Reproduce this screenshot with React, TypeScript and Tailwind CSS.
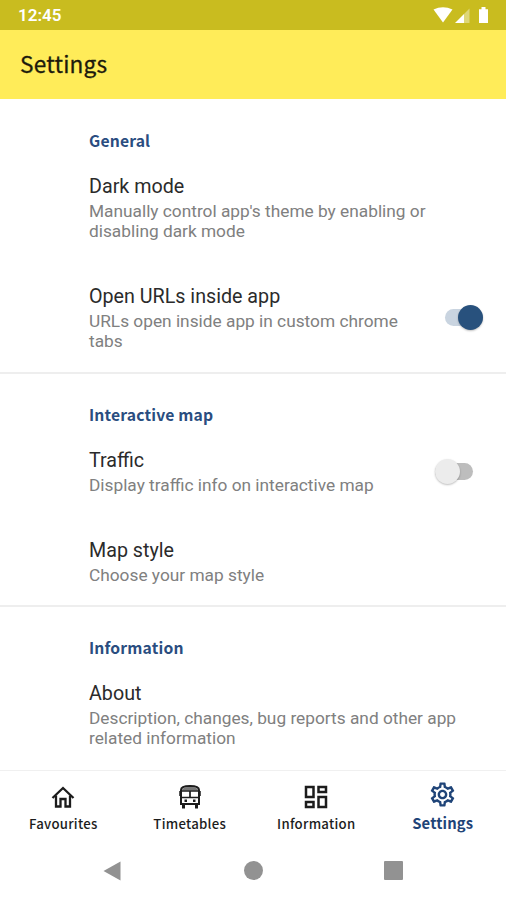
import type { ReactNode } from "react";
import clsx from "clsx";
import { MdOutlineDashboard, MdOutlineSettings } from "react-icons/md";

interface PreferenceProps {
  title: string;
  summary: string[];
  checked?: boolean;
}

interface SectionProps {
  title: string;
  children: ReactNode;
}

function StatusBar() {
  return (
    <div className="flex h-[30px] items-center justify-between bg-[#c9bc1f] pl-[18px] pr-[14px] text-white">
      <span className="pt-[2px] font-['Roboto',sans-serif] text-[17px] font-semibold">12:45</span>
      <svg width="60" height="18" viewBox="0 0 60 18" fill="currentColor">
        <path d="M1.500 3.500Q11 -1 20.500 3.500L11 16.500Z" />
        <path d="M23 17L32 8V17Z" />
        <path d="M32 8L37.500 2.500V17H32Z" opacity="0.4" />
        <path d="M47 3.200h2.500V1h4v2.200H56V17H47Z" />
      </svg>
    </div>
  );
}

function Switch({ checked }: { checked: boolean }) {
  return (
    <div
      className={clsx(
        "flex h-[17px] w-[38px] items-center rounded-full",
        checked ? "justify-end bg-[#c9d4e0]" : "bg-[#bdbdbd]",
      )}
    >
      <div
        className={clsx(
          "size-[25px] shrink-0 rounded-full shadow-[0_1px_2px_rgba(0,0,0,0.25)]",
          checked ? "bg-[#28517d]" : "bg-[#ececec]",
        )}
      />
    </div>
  );
}

function Preference({ title, summary, checked }: PreferenceProps) {
  return (
    <div className="flex items-center justify-between pb-5 pt-6 font-['Roboto',sans-serif]">
      <div>
        <div className="text-[19.7px] leading-[24px] text-[#2b2b2b]">{title}</div>
        <div className="mt-[2px] text-[17.3px] leading-[20px] text-[#808080]">
          {summary.map((line) => (
            <div key={line} className="whitespace-nowrap">
              {line}
            </div>
          ))}
        </div>
      </div>
      {checked !== undefined && (
        <div className={clsx("pb-[2px]", checked ? "mr-[23px]" : "mr-[33px]")}>
          <Switch checked={checked} />
        </div>
      )}
    </div>
  );
}

function Section({ title, children }: SectionProps) {
  return (
    <section className="border-b-2 border-[#eeeeee] pl-[89px] first:pb-px last:border-b-0">
      <h2 className="h-[51px] pt-[29px] font-['Noto_Sans_CJK_SC',sans-serif] text-[15.7px] font-bold leading-[24px] tracking-[0.01em] text-[#2a4d80]">
        {title}
      </h2>
      {children}
    </section>
  );
}

function HomeIcon() {
  return (
    <svg width="24" height="24" viewBox="0 0 24 24" fill="none" stroke="currentColor" strokeWidth="2.300">
      <path d="M1.500 13L12 3L22.500 13" />
      <path d="M5 10.500V21.500H9.500V14H14.500V21.500H19V10.500" />
    </svg>
  );
}

function BusIcon() {
  return (
    <svg width="26" height="26" viewBox="0 0 26 26" fill="none" stroke="currentColor">
      <path d="M4 6Q4 2 13 2Q22 2 22 6V20H4Z" strokeWidth="2" />
      <path d="M5 6.500Q5 3 13 3Q21 3 21 6.500Z" fill="currentColor" stroke="none" opacity="0.6" />
      <path d="M4 7H22M4 13.500H22M13 7V13" strokeWidth="1.700" />
      <path d="M3 7V12M23 7V12" strokeWidth="1.500" />
      <path d="M6.500 20V24.500M19.500 20V24.500" strokeWidth="3" />
      <path d="M7.500 16.800H10M16 16.800H18.500" strokeWidth="2.500" />
    </svg>
  );
}

const tabs = [
  { label: "Favourites", icon: <HomeIcon /> },
  { label: "Timetables", icon: <BusIcon /> },
  { label: "Information", icon: <MdOutlineDashboard size={30} /> },
  { label: "Settings", icon: <MdOutlineSettings size={29} />, active: true },
];

function BottomNav() {
  return (
    <nav className="grid h-[74px] grid-cols-4 border-t border-[#f0f0f0] font-['Noto_Sans_CJK_SC',sans-serif]">
      {tabs.map((tab) => (
        <div
          key={tab.label}
          className={clsx(
            "flex flex-col items-center",
            tab.active ? "pt-[8px] text-[#1f4478]" : "pt-[10px] text-[#1c1c1c]",
          )}
        >
          <div className="flex h-[31px] items-center">{tab.icon}</div>
          <span
            className={clsx(
              "leading-[20px]",
              tab.active
                ? "mt-[3px] text-[14.8px] font-bold tracking-[0.01em]"
                : "mt-[2px] text-[13.2px] font-medium tracking-[0.02em]",
            )}
          >
            {tab.label}
          </span>
        </div>
      ))}
    </nav>
  );
}

function SystemNav() {
  return (
    <div className="flex h-[56px] items-start justify-between pl-[103px] pr-[103px] pt-[17px] text-[#929292]">
      <svg width="20" height="20" viewBox="0 0 20 20" fill="currentColor">
        <path d="M0.500 10L17.500 0.500V19.500Z" />
      </svg>
      <div className="size-[19px] rounded-full bg-current" />
      <div className="size-[19px] rounded-[1px] bg-current" />
    </div>
  );
}

export default function App() {
  return (
    <div className="flex h-[900px] w-[506px] flex-col overflow-hidden bg-white">
      <StatusBar />
      <header className="flex h-[69px] items-center bg-[#ffec59] pb-px pl-[20px]">
        <h1 className="font-['Noto_Sans_CJK_SC',sans-serif] text-[22.6px] font-normal tracking-[0.01em] text-[#1c1a0c] [-webkit-text-stroke:0.3px]">
          Settings
        </h1>
      </header>
      <main className="min-h-0 flex-1 overflow-hidden pt-px">
        <Section title="General">
          <Preference
            title="Dark mode"
            summary={["Manually control app's theme by enabling or", "disabling dark mode"]}
          />
          <Preference
            title="Open URLs inside app"
            summary={["URLs open inside app in custom chrome", "tabs"]}
            checked
          />
        </Section>
        <Section title="Interactive map">
          <Preference
            title="Traffic"
            summary={["Display traffic info on interactive map"]}
            checked={false}
          />
          <Preference title="Map style" summary={["Choose your map style"]} />
        </Section>
        <Section title="Information">
          <Preference
            title="About"
            summary={["Description, changes, bug reports and other app", "related information"]}
          />
        </Section>
      </main>
      <BottomNav />
      <SystemNav />
    </div>
  );
}
